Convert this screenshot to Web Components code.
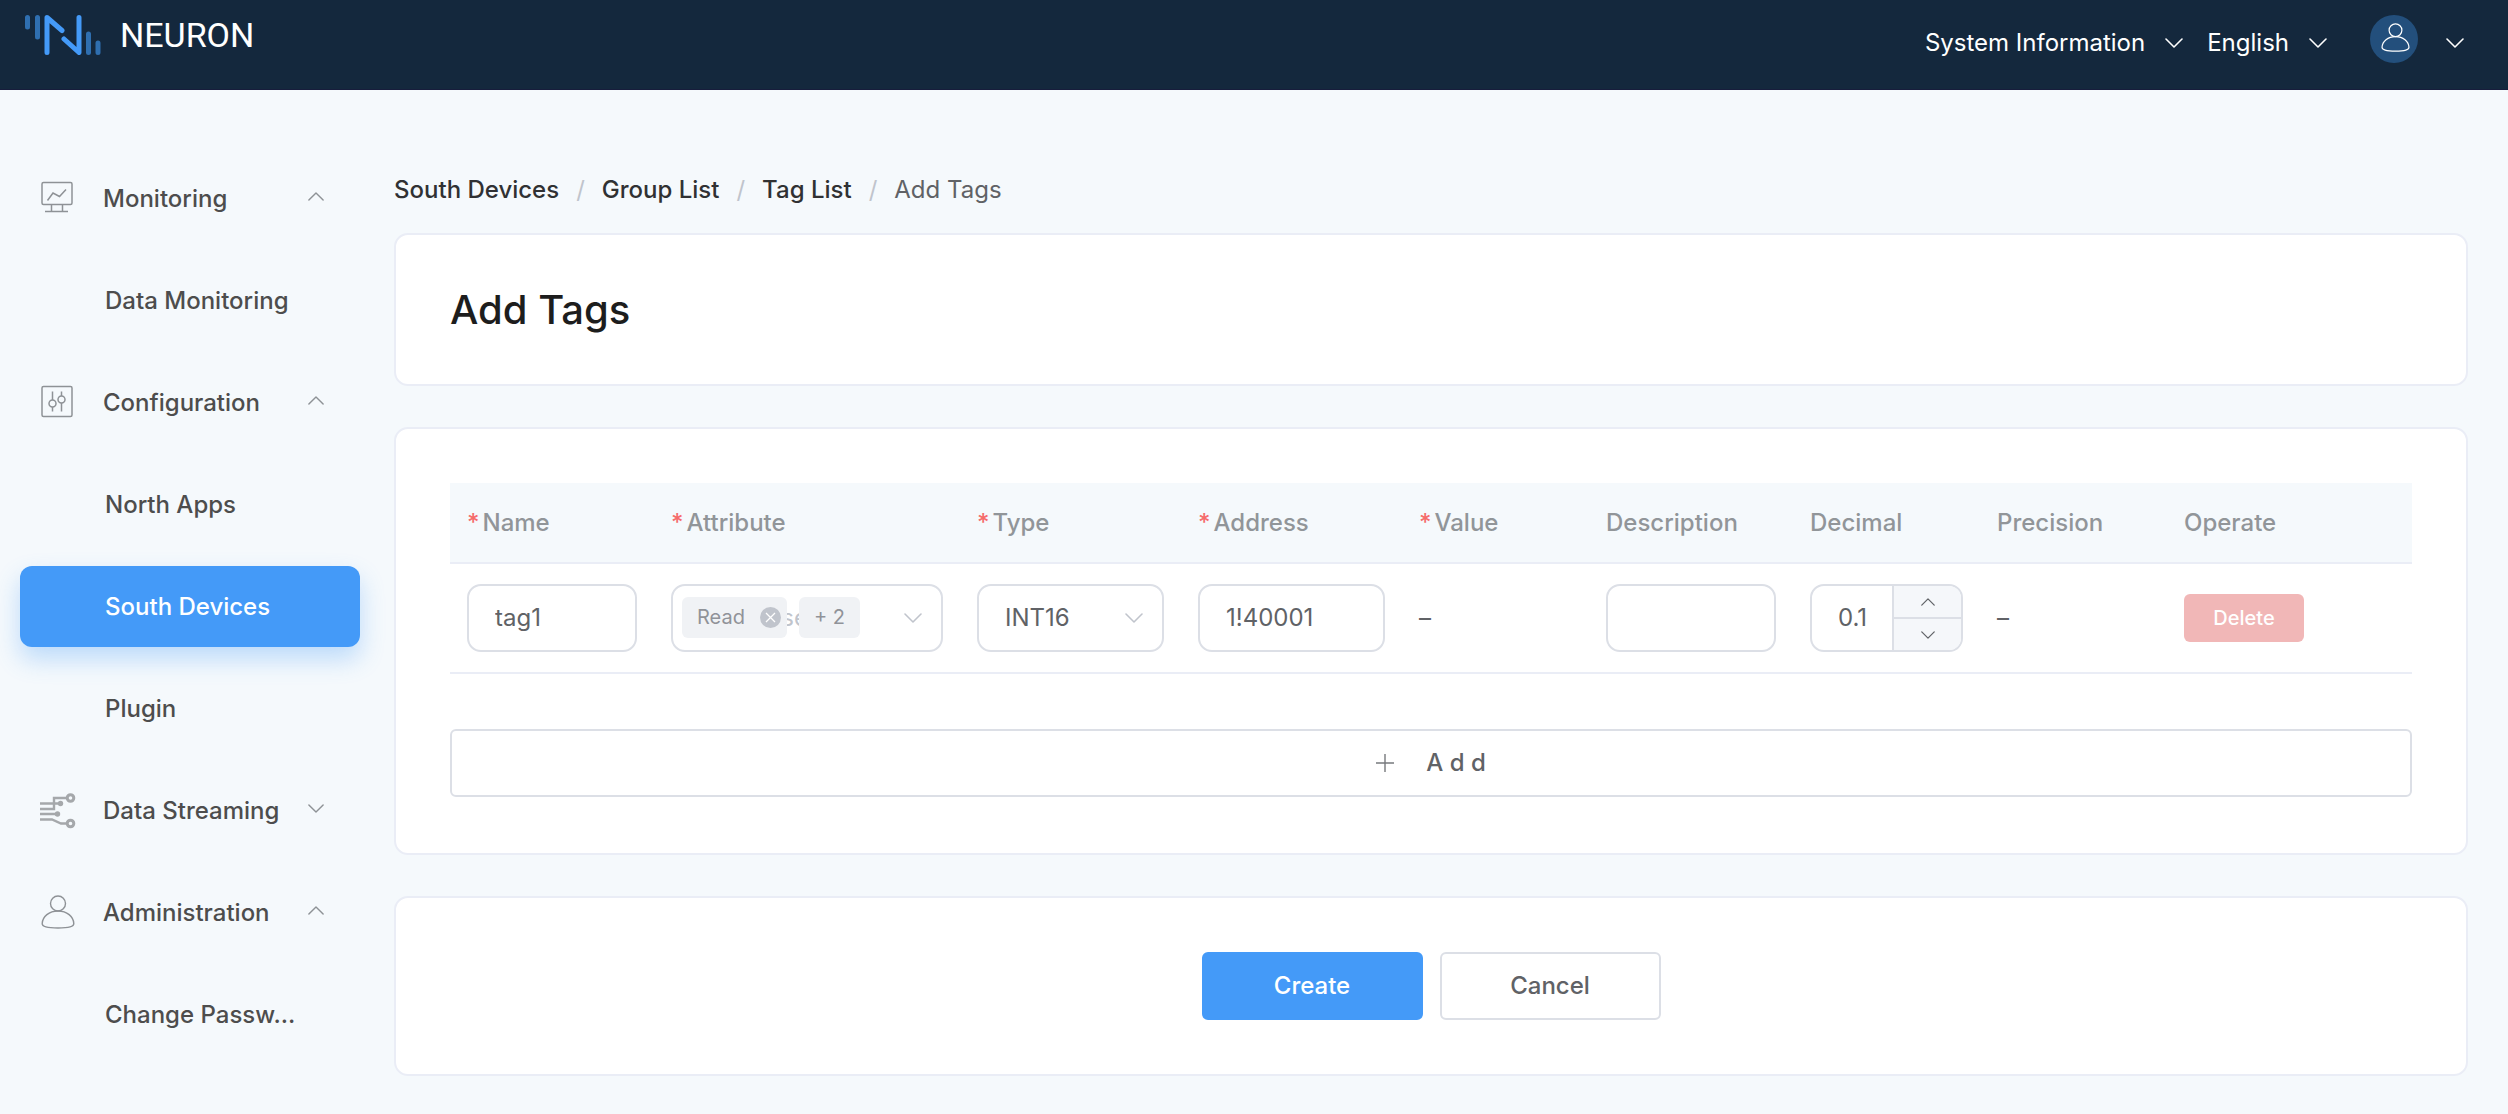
<!DOCTYPE html>
<html lang="en">
<head>
<meta charset="utf-8">
<title>Neuron - Add Tags</title>
<style>
  :root {
    --primary: #449af8;
    --page: #f5f9fc;
    --line: #eaedf6;
    --field: #dcdfe6;
    --text: #606266;
  }
  html, body { margin: 0; min-height: 100%; }
  body {
    background: var(--page);
    color: #4d4d4d;
    font: 400 24px/32px Inter, "Liberation Sans", sans-serif;
  }
</style>
</head>
<body>
<neuron-app></neuron-app>

<script>
const define = (name, html, setup) => {
  const template = document.createElement('template');
  template.innerHTML = '<style>*{box-sizing:border-box}button,input,select{font:inherit;color:inherit;margin:0}</style>' + html;
  customElements.define(name, class extends HTMLElement {
    constructor() {
      super();
      this.attachShadow({ mode: 'open' }).append(template.content.cloneNode(true));
    }
    connectedCallback() { if (setup) setup(this, this.shadowRoot); }
  });
};

/* Thin arrow; direction="up" turns it over. */
define('chevron-icon', `
<style>
  :host { display: block; flex: none; width: 18px; height: 10px; }
  :host([direction="up"]) svg { transform: rotate(180deg); }
  :host([size="small"]) { width: 14px; height: 8px; }
  svg { display: block; width: 100%; height: 100%; }
</style>
<svg viewBox="0 0 18 10" fill="none" stroke="currentColor" stroke-width="1.6" stroke-linecap="round" stroke-linejoin="round"><path d="M1 1l8 8 8-8"/></svg>`);

const USER = '<circle cx="17" cy="8.500" r="7.500"/><path d="M17 16C8 16 1.600 21.500 1.200 28.500C1 31.500 6 33 17 33C28 33 33 31.500 32.800 28.500C32.400 21.500 26 16 17 16Z"/>';

define('user-icon', `
<style>
  :host { display: block; flex: none; width: 34px; height: 34px; }
  svg { display: block; width: 100%; height: 100%; }
</style>
<svg viewBox="0 0 34 34" fill="none" stroke="currentColor" stroke-width="1.4">${USER}</svg>`);

define('neuron-logo', `
<style>
  :host { display: flex; align-items: center; gap: 18px; color: #fff; font: 400 34px/40px Roboto, sans-serif; }
  svg { display: block; width: 78px; height: 40px; }
</style>
<svg viewBox="0 0 78 40" fill="none" stroke-width="5" stroke-linecap="round" stroke-linejoin="round" aria-hidden="true">
  <path stroke="#2f6fb0" d="M3.500 2.500V12M13.500 2.500V22M64.500 19V37.500M74 28V37.500"/>
  <path stroke="#449af8" d="M23 37.500V2.500L38 15.500M40 24L55 37.500V2.500"/>
</svg>
<span>NEURON</span>`);

define('neuron-header', `
<style>
  :host { display: flex; justify-content: space-between; height: 90px; padding: 0 44px 0 24px; background: #14283d; border-bottom: 1px solid #171d3c; color: #fff; }
  neuron-logo { align-self: flex-start; padding-top: 15px; }
  nav { display: flex; align-items: center; padding-bottom: 4px; }
  button { display: flex; align-items: center; gap: 20px; padding: 0; border: 0; background: none; }
  button + button { margin-left: 24px; }
  button.user { gap: 28px; margin-left: 43px; padding-bottom: 8px; }
  .user chevron-icon { margin-top: 8px; }
  .avatar { display: grid; place-items: center; width: 48px; height: 48px; border-radius: 50%; background: #234f7c; }
  .avatar user-icon { width: 29px; height: 29px; margin-bottom: 2px; margin-left: 2px; }
</style>
<neuron-logo></neuron-logo>
<nav>
  <button>System Information<chevron-icon></chevron-icon></button>
  <button>English<chevron-icon></chevron-icon></button>
  <button class="user" aria-label="Account"><span class="avatar"><user-icon></user-icon></span><chevron-icon></chevron-icon></button>
</nav>`);

/* Group title of the side menu: icon slot, title slot, arrow. */
define('nav-group', `
<style>
  :host { display: block; }
  button { display: flex; align-items: center; width: 100%; height: 81px; padding: 0 36px 0 20px; border: 0; background: none; font-weight: 500; text-align: left; }
  .icon { display: flex; width: 63px; height: 36px; color: #8e9296; }
  .title { flex: 1; }
  chevron-icon { width: 16px; height: 9px; color: #8e9296; margin-bottom: 4px; }
</style>
<button><span class="icon"><slot name="icon"></slot></span><span class="title"><slot></slot></span><chevron-icon></chevron-icon></button>`,
(host, root) => root.querySelector('chevron-icon').setAttribute('direction', host.getAttribute('arrow') || 'up'));

define('nav-link', `
<style>
  :host { display: block; }
  a { display: flex; align-items: center; height: 81px; padding-left: 85px; border-radius: 12px; color: inherit; font-weight: 500; text-decoration: none; white-space: nowrap; }
  :host([active]) a { background: var(--primary); color: #fff; box-shadow: 0 12px 24px rgba(68, 154, 248, .32); }
</style>
<a href="#"><slot></slot></a>`);

define('neuron-sidebar', `
<style>
  :host { display: flex; flex-direction: column; flex: none; gap: 21px; width: 380px; padding: 68px 20px 20px; }
  svg { display: block; width: 36px; height: 36px; fill: none; stroke: currentColor; stroke-width: 1.5; }
  user-icon { margin-left: 1px; }
</style>
<nav-group><svg slot="icon" viewBox="0 0 36 36"><rect x="2" y="1.500" width="30" height="22" rx="1.500"/><path d="M7.500 19.500L13 12L19.500 15.500L26 8.500M11.500 23.500V30.500H22.500V23.500M5 30.500H28"/></svg>Monitoring</nav-group>
<nav-link>Data Monitoring</nav-link>
<nav-group><svg slot="icon" viewBox="0 0 36 36"><rect x="2" y="1.500" width="30" height="30" rx="1.500"/><path d="M12.500 6.500V15M12.500 22V26.500M21.500 6.500V11M21.500 18V26.500"/><circle cx="12.500" cy="18.500" r="3.500"/><circle cx="21.500" cy="14.500" r="3.500"/></svg>Configuration</nav-group>
<nav-link>North Apps</nav-link>
<nav-link active>South Devices</nav-link>
<nav-link>Plugin</nav-link>
<nav-group arrow="down"><svg slot="icon" viewBox="0 0 36 36" color="#a5a8ab"><g stroke-width="2.400"><path d="M0 10.500H19M0 16H14V5H27M0 21H17M0 26.500H12L21 30.500H27"/><circle cx="30.500" cy="5" r="3.300" stroke-width="3"/><circle cx="30.500" cy="30.500" r="3.300" stroke-width="3"/></g><g fill="currentColor" stroke="none"><circle cx="20.500" cy="10.500" r="2.700"/><circle cx="17.500" cy="21" r="2.700"/></g></svg>Data Streaming</nav-group>
<nav-group><user-icon slot="icon"></user-icon>Administration</nav-group>
<nav-link>Change Passw...</nav-link>`);

define('bread-crumb', `
<style>
  :host { display: block; }
  ol { display: flex; gap: 17px; margin: 0; padding: 0; list-style: none; color: var(--text); }
  li { display: flex; gap: 17px; }
  li + li::before { content: "/"; color: #c0c4cc; }
  a { color: #303133; font-weight: 500; text-decoration: none; }
</style>
<ol><li><a href="#">South Devices</a></li><li><a href="#">Group List</a></li><li><a href="#">Tag List</a></li><li>Add Tags</li></ol>`);

define('app-card', `
<style>
  :host { display: block; padding: 54px; background: #fff; border: 2px solid var(--line); border-radius: 14px; }
</style>
<slot></slot>`);

define('app-button', `
<style>
  :host { display: block; }
  button { display: flex; align-items: center; justify-content: center; gap: 32px; width: 100%; height: 68px; padding: 0; border: 2px solid var(--field); border-radius: 6px; background: #fff; color: var(--text); font-weight: 500; }
  :host([kind="primary"]) button { border-color: var(--primary); background: var(--primary); color: #fff; }
  :host([kind="danger"]) button { width: 120px; height: 48px; border: 0; background: #f1b7b7; color: #fff; font-size: 20px; }
</style>
<button><slot></slot></button>`);

define('number-steps', `
<style>
  :host { display: flex; flex-direction: column; flex: none; width: 69px; border-left: 2px solid var(--field); background: #f5f7fa; }
  button { display: grid; place-items: center; flex: 1; padding: 0; border: 0; background: none; }
  button + button { border-top: 2px solid var(--field); }
</style>
<button aria-label="Increase"><chevron-icon size="small" direction="up"></chevron-icon></button>
<button aria-label="Decrease"><chevron-icon size="small"></chevron-icon></button>`);

define('tag-table', `
<style>
  :host { display: block; color: var(--text); }
  table { width: 100%; table-layout: fixed; border-collapse: separate; border-spacing: 0; }
  th, td { padding: 0 17px; border-bottom: 2px solid var(--line); text-align: left; }
  th { height: 81px; background: var(--page); color: #919599; font-weight: 500; white-space: nowrap; }
  td { height: 110px; }
  th.required::before { content: "*"; margin-right: 3px; color: #f56c6c; }
  .field { position: relative; display: flex; align-items: stretch; height: 68px; border: 2px solid var(--field); border-radius: 14px; background: #fff; overflow: hidden; }
  input, select { flex: 1; width: 100%; min-width: 0; padding: 0 26px; border: 0; outline: 0; background: none; appearance: none; }
  input::placeholder { color: #c0c4cc; opacity: 1; }
  .arrow { position: absolute; right: 19px; top: 27px; color: #c0c4cc; pointer-events: none; }
  .tags { position: absolute; left: 9px; top: 11px; display: flex; gap: 12px; color: #909399; font-size: 20px; line-height: 41px; }
  .tags span { display: flex; align-items: center; gap: 15px; padding: 0 6px 0 15px; border-radius: 6px; background: #f0f2f5; }
  .tags span + span { padding-right: 15px; }
  .tags button { display: flex; padding: 0; border: 0; background: none; }
</style>
<table>
  <colgroup><col style="width:204px"><col style="width:306px"><col style="width:221px"><col style="width:221px"><col style="width:187px"><col style="width:204px"><col style="width:187px"><col style="width:187px"><col style="width:245px"></colgroup>
  <thead><tr>
    <th class="required"><label for="name">Name</label></th>
    <th class="required"><label for="attribute">Attribute</label></th>
    <th class="required"><label for="type">Type</label></th>
    <th class="required"><label for="address">Address</label></th>
    <th class="required">Value</th>
    <th><label for="description">Description</label></th>
    <th><label for="decimal">Decimal</label></th>
    <th>Precision</th>
    <th>Operate</th>
  </tr></thead>
  <tbody><tr>
    <td><div class="field"><input id="name" value="tag1"></div></td>
    <td><div class="field"><input id="attribute" placeholder="Please select" readonly>
      <div class="tags"><span>Read<button aria-label="Remove Read"><svg width="21" height="21" viewBox="0 0 21 21"><circle cx="10.500" cy="10.500" r="10.500" fill="#c0c4cc"/><path d="M6 6l9 9M15 6l-9 9" stroke="#fff" stroke-width="1.300"/></svg></button></span><span>+ 2</span></div>
      <chevron-icon class="arrow"></chevron-icon></div></td>
    <td><div class="field"><select id="type"><option>INT16</option></select><chevron-icon class="arrow"></chevron-icon></div></td>
    <td><div class="field"><input id="address" value="1!40001"></div></td>
    <td>–</td>
    <td><div class="field"><input id="description"></div></td>
    <td><div class="field"><input id="decimal" value="0.1"><number-steps></number-steps></div></td>
    <td>–</td>
    <td><app-button kind="danger">Delete</app-button></td>
  </tr></tbody>
</table>`);

define('neuron-app', `
<style>
  :host { display: block; }
  .body { display: flex; }
  main { flex: 1; min-width: 0; display: flex; flex-direction: column; gap: 41px; padding: 84px 40px 36px 14px; }
  header { display: flex; flex-direction: column; gap: 27px; }
  h1 { margin: 0; color: #1d1d1d; font-size: 40px; line-height: 41px; font-weight: 500; }
  .list { padding-bottom: 56px; }
  .add { margin-top: 55px; }
  .actions { display: flex; justify-content: center; gap: 17px; }
  .actions app-button { width: 221px; }
</style>
<neuron-header></neuron-header>
<div class="body">
  <neuron-sidebar></neuron-sidebar>
  <main>
    <header>
      <bread-crumb></bread-crumb>
      <app-card><h1>Add Tags</h1></app-card>
    </header>
    <app-card class="list">
      <tag-table></tag-table>
      <app-button class="add"><svg width="18" height="18" viewBox="0 0 18 18" stroke="#77797d" stroke-width="1.400"><path d="M9 0V18M0 9H18"/></svg>A d d</app-button>
    </app-card>
    <app-card><div class="actions"><app-button kind="primary">Create</app-button><app-button>Cancel</app-button></div></app-card>
  </main>
</div>`);
</script>
</body>
</html>
